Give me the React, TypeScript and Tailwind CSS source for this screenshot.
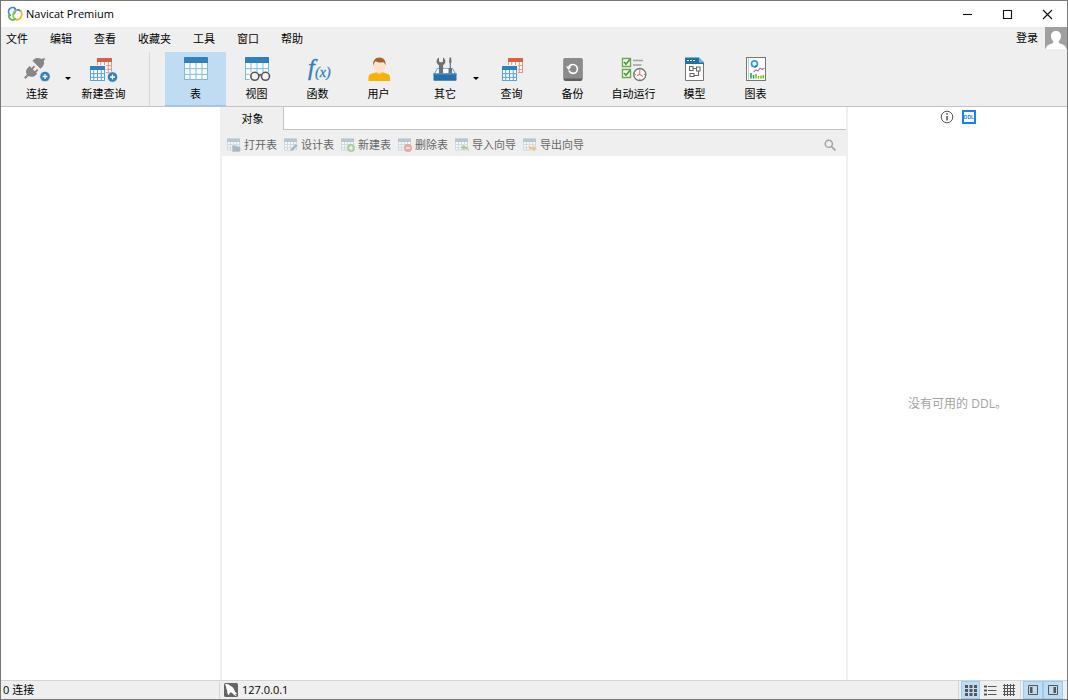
import type { ReactNode } from "react";

const BLUE = "#2f80bd";
const RED = "#dd5f42";

type GridProps = { x: number; y: number; w: number; h: number; color: string; line: string; cols?: number; head?: number };

function Grid({ x, y, w, h, color, line, cols = 4, head = 5 }: GridProps) {
  const body = h - head;
  return (
    <g>
      <rect x={x + 0.5} y={y + 0.5} width={w - 1} height={h - 1} fill="#fff" stroke={line} />
      {Array.from({ length: cols - 1 }, (_, i) => (
        <path key={`c${i}`} d={`M${x + ((i + 1) * w) / cols} ${y + head}v${body}`} stroke={line} />
      ))}
      {[1, 2].map((i) => (
        <path key={`r${i}`} d={`M${x} ${y + head + (i * body) / 3}h${w}`} stroke={line} />
      ))}
      <path d={`M${x} ${y + head}v${-head + 1}q0 -1 1 -1h${w - 2}q1 0 1 1v${head - 1}z`} fill={color} />
    </g>
  );
}

function Plus({ x, y }: { x: number; y: number }) {
  return (
    <g>
      <circle cx={x} cy={y} r="5.2" fill={BLUE} stroke="#efefef" strokeWidth="0.8" />
      <path d={`M${x - 2.5} ${y}h5M${x} ${y - 2.5}v5`} stroke="#fff" strokeWidth="1.3" />
    </g>
  );
}

function Art({ children }: { children: ReactNode }) {
  return (
    <svg className="overflow-visible" width="28" height="26" viewBox="0 0 28 26" fill="none" aria-hidden="true">
      {children}
    </svg>
  );
}

const art = {
  connect: (
    <Art>
      <g fill="#868686">
        <path d="M22.2 2l1.100 1.100-1.600 1.700c.8 2.300.2 4.500-1.400 6.100l-1.900 1.900-8-8 1.700-1.600c1.700-1.600 5-1.800 7.500-.1z" transform="translate(-1 0)" />
        <path d="M5.600 11.500l1.600-1.400 1.900 1.900 2.300-2.400 1.300 1.300-2.300 2.400 1.900 1.900 2.300-2.300 1.300 1.300-2.300 2.300 1.100 1.200-1.600 1.500c-2.100 1.900-5.200 2.100-7.200.8l-2.900 3-1.500-1.500 2.900-2.900c-1.600-2.300-.9-5.200 1.200-7.100z" transform="translate(-.5 0)" />
      </g>
      <Plus x={22} y={20.5} />
    </Art>
  ),
  newQuery: (
    <Art>
      <Grid x={7} y={2} w={15} h={15} color={RED} line="#e99380" cols={4} head={4} />
      <path d="M0 9h16v17h-16z" fill="#efefef" />
      <Grid x={0} y={10} w={15} h={15} color={BLUE} line="#57a3dc" cols={4} head={4} />
      <Plus x={22.5} y={21} />
    </Art>
  ),
  table: (
    <Art>
      <Grid x={2} y={1} w={24} h={23} color={BLUE} line="#78bbe8" head={6} />
    </Art>
  ),
  view: (
    <Art>
      <Grid x={2} y={1} w={24} h={23} color={BLUE} line="#78bbe8" head={6} />
      <path d="M6.500 16h21.500v9h-21.500z" fill="#efefef" />
      <g stroke="#555" strokeWidth="1.600" fill="#f3f3f3">
        <circle cx="11.800" cy="20.300" r="4" />
        <circle cx="22.500" cy="20.300" r="4" />
        <path d="M15.600 19.500q1.500-1.500 3 0" fill="none" />
      </g>
    </Art>
  ),
  fn: (
    <Art>
      <text x="4" y="19" fill={BLUE} className="font-['Liberation_Serif',serif] text-[24px] italic" stroke={BLUE} strokeWidth="0.4">f</text>
      <text x="11" y="21" fill={BLUE} className="font-['Liberation_Serif',serif] text-[14px] italic" stroke={BLUE} strokeWidth="0.3">(x)</text>
    </Art>
  ),
  user: (
    <Art>
      <path d="M3.500 25v-3.500c0-2.500 1.600-3.700 3.800-4.100l4-1.100h6l4 1.100c2.200.4 3.800 1.600 3.800 4.100v3.500z" fill="#f9b200" />
      <path d="M11.300 13h6v3.600q-3 3.400-6 0z" fill="#f5cfae" />
      <path d="M8.500 7h11.800v3c0 4-2.800 6.700-5.900 6.700s-5.900-2.700-5.900-6.700z" fill="#fbe3cd" />
      <path d="M8.300 9.500c-.8-5 2-8 6.100-8s6.900 3 6.100 8c-.4-1.500-1-2.500-1.900-3.200-2.700.5-6 .4-8.200-1-.9 1.100-1.600 2.500-2.100 4.200z" fill="#a9602c" />
    </Art>
  ),
  tools: (
    <Art>
      <path d="M2.800 19l3.700-6.500h15l3.700 6.500" fill="#fff" stroke="#75b4df" strokeWidth="1.200" />
      <path d="M8 1.500v4l2 1 2-1v-4c3.200 1.800 3.100 6.200.1 7.600v8.400h-4.200v-8.400c-3-1.400-3.100-5.800.1-7.600z" fill="#707070" />
      <path d="M18.500 1.500h1.600l.4 4.500-.6 1.500v4.200l1.200.8v5h-3.600v-5l1.200-.8v-4.200l-.6-1.500z" fill="#707070" />
      <path d="M2.500 17.500h23v6.500q0 .8-.8.8h-21.400q-.8 0-.8-.8z" fill="#256fab" />
      <path d="M2.500 17.500h23v1.200h-23z" fill="#3f8fc9" />
    </Art>
  ),
  query: (
    <Art>
      <Grid x={10} y={2} w={15} h={15} color={RED} line="#e99380" cols={4} head={4} />
      <path d="M3 9h17v17h-17z" fill="#efefef" />
      <Grid x={4} y={10} w={15} h={15} color={BLUE} line="#57a3dc" cols={4} head={4} />
    </Art>
  ),
  backup: (
    <Art>
      <rect x="4.500" y="2" width="19" height="23" rx="2" fill="#5f5f5f" />
      <rect x="4.500" y="2" width="19" height="20.500" rx="1.500" fill="#8b8b8b" />
      <path d="M10 14.500c1 2.200 2.500 3 4.200 2.900 2.500-.2 4.300-2.100 4.200-4.500s-2-4.400-4.500-4.400c-2.200 0-3.900 1.500-4.300 3.600" stroke="#fff" strokeWidth="1.700" />
      <path d="M7 10.500h5.500l-2.800 3.800z" fill="#fff" />
    </Art>
  ),
  auto: (
    <Art>
      <g stroke="#65ac4d" strokeWidth="1.400">
        <path d="M2.500 2.500h8v8h-8zM2.500 13.500h8v8h-8z" fill="#fff" />
        <path d="M4 6l2 2.200 4-5M4 17l2 2.200 4-5" stroke="#4d9f35" strokeWidth="1.800" />
      </g>
      <path d="M13 4.500h10M13 9h8.500" stroke="#a1a1a1" strokeWidth="1.500" />
      <circle cx="19.800" cy="18.500" r="6" fill="#fff" stroke="#777" strokeWidth="1.400" />
      <path d="M19.800 14.500v4l3.200 2M19.800 18.500l-3 1" stroke="#dd6f5b" strokeWidth="1.100" />
      <path d="M19.800 13.500v1M19.800 22.500v1M14.800 18.500h1M23.800 18.500h1" stroke="#777" />
    </Art>
  ),
  model: (
    <Art>
      <path d="M4.500 2v22.500h18v-17.500" fill="#fff" stroke="#777" />
      <path d="M4 1.500h14l5 5v1.500h-19z" fill="#1c71ae" />
      <path d="M18 1.500l5 5h-5z" fill="#75b7e8" />
      <path d="M6 4.500h2M9 4.500h2M12 4.500h2" stroke="#fff" />
      <g stroke="#686868" strokeWidth="1.100">
        <path d="M8.500 10.500h3.500v4h-3.500zM15.500 11h3.500v4h-3.500zM9 17.500h4v3h-4zM12 12.500h3.500M17.500 15v4.500h-4.500" />
      </g>
    </Art>
  ),
  chart: (
    <Art>
      <rect x="4.500" y="1.500" width="19" height="23" fill="#fff" stroke="#777" />
      <path d="M6.500 2v22" stroke="#ccc" />
      <circle cx="12.500" cy="7.800" r="3" stroke="#25a2df" strokeWidth="1.700" />
      <path d="M14.500 9.800a3 3 0 0 1-2 1" stroke="#3067c5" strokeWidth="1.700" />
      <path d="M11.500 16l2.500-2 2 1 2-3 2 1.500 2.500-1.500" stroke="#bb70ca" strokeWidth="1.200" />
      <path d="M9 17v5.500M11.500 19v3.500" stroke="#159a62" strokeWidth="1.500" />
      <path d="M14 18v4.500M16.500 20v2.500M19 19.500v3M21.300 19v3.500" stroke="#73bd23" strokeWidth="1.500" />
    </Art>
  ),
};

function Tool({ icon, label, active = false, menu = false }: { icon: ReactNode; label: string; active?: boolean; menu?: boolean }) {
  return (
    <button
      type="button"
      className={`relative flex h-[54px] shrink-0 flex-col items-center gap-1 pt-1 ${menu ? "w-[72px]" : "w-[61px]"} ${active ? "border-b border-[#90c8f6] bg-[#c0dcf3]" : "hover:bg-[#dfeaf3]"}`}
    >
      {icon}
      <span className="text-[11px] leading-4">{label}</span>
      {menu && <span className="absolute right-0.5 top-[25px] border-x-[3px] border-t-[3px] border-x-transparent border-t-black" />}
    </button>
  );
}

const actions: { label: string; mark: ReactNode }[] = [
  { label: "打开表", mark: <path d="M5 7h3l1 1h4v1.500h1l-1 4.500h-8z" fill="#91a5b5" stroke="#efefef" strokeWidth="0.600" /> },
  { label: "设计表", mark: <path d="M6 13.500l.8-3 5-5 2.200 2.200-5 5z" fill="#8fa6b7" stroke="#efefef" strokeWidth="0.600" /> },
  {
    label: "新建表",
    mark: (
      <>
        <circle cx="10" cy="10" r="4" fill="#98c48b" />
        <path d="M7.800 10h4.400M10 7.800v4.400" stroke="#fff" strokeWidth="1.200" />
      </>
    ),
  },
  {
    label: "删除表",
    mark: (
      <>
        <circle cx="10" cy="10" r="4" fill="#df928b" />
        <path d="M7.800 10h4.400" stroke="#fff" strokeWidth="1.200" />
      </>
    ),
  },
  { label: "导入向导", mark: <path d="M5.500 9.500l4-3.500v2c3 0 4.800 1.500 4.500 6-1-2.200-2-2.800-4.500-2.700v1.700z" fill="#8fc07f" stroke="#efefef" strokeWidth="0.500" /> },
  { label: "导出向导", mark: <path d="M6 6c.2 2.300 1.200 3 4 3v-1.800l4 3.300-4 3.500v-2c-3.500 0-5.500-2.200-4-6z" fill="#ecb566" stroke="#efefef" strokeWidth="0.500" /> },
];

function ActionIcon({ mark }: { mark: ReactNode }) {
  return (
    <svg className="opacity-75" width="14" height="14" viewBox="0 0 14 14" fill="none" aria-hidden="true">
      <path d="M.5 1h12v11h-12z" fill="#f8fafb" stroke="#c7d2da" />
      <path d="M3.500 4v8M6.500 4v8M9.500 4v8M0 6.500h13M0 9.500h13" stroke="#c7d2da" />
      <path d="M0 .5h13v3.500h-13z" fill="#a5bac9" />
      {mark}
    </svg>
  );
}

function StatusButton({ label, active = false, wide = false, children }: { label: string; active?: boolean; wide?: boolean; children: ReactNode }) {
  return (
    <button
      type="button"
      aria-label={label}
      aria-pressed={active}
      className={`flex h-[18px] items-center justify-center border ${wide ? "w-5" : "w-[19px]"} ${active ? "border-[#9acbf2] bg-[#c0dcf3]" : "border-transparent"}`}
    >
      <svg width="14" height="12" viewBox="0 0 14 12" fill="none" stroke="#555" aria-hidden="true">
        {children}
      </svg>
    </button>
  );
}

const menus = ["文件", "编辑", "查看", "收藏夹", "工具", "窗口", "帮助"];

export default function App() {
  return (
    <div className="flex min-h-screen flex-col border border-[#777] bg-white font-['Open_Sans','Noto_Sans_CJK_SC',sans-serif] text-[11px] leading-4 text-black">
      <header className="flex h-[26px] items-center">
        <svg className="ml-1.5" width="16" height="16" viewBox="0 0 16 16" fill="none" strokeWidth="1.700" strokeLinecap="round" aria-hidden="true">
          <path d="M3.200 9.300C1.200 7.200 1 4.500 2.600 2.900S6.800.9 8 2.500c1.100 1.600.3 3.900-1.800 6" stroke="#2f86ee" />
          <path d="M9.300 4.300c1.600-.8 3.300-.5 4.400.8" stroke="#2f86ee" />
          <path d="M9.300 4.300C7.500 5.200 6.200 7 6.200 8.900c-.2 2.100 1.200 4.500 3.800 4.700" stroke="#9ecb35" />
          <path d="M13.700 5.100c1.200 1.300 1.400 3.500.7 5.300-.8 2-2.500 3.300-4.400 3.200" stroke="#f7b81c" />
          <path d="M2.300 8.200c-.7 1.900-.2 4.100 1.300 5.100 1.400.9 3.200.7 4.400-.3" stroke="#58c155" />
        </svg>
        <h1 className="ml-[3px] flex-1">Navicat Premium</h1>
        {[
          { label: "最小化", d: "M1 5.500h9" },
          { label: "最大化", d: "M1.500 1.500h8v8h-8z" },
          { label: "关闭", d: "M1 1l9 9M10 1l-9 9" },
        ].map((b) => (
          <button key={b.label} type="button" aria-label={b.label} className="flex h-full w-10 items-center justify-center">
            <svg width="11" height="11" viewBox="0 0 11 11" fill="none" stroke="#111" strokeWidth="1.100" aria-hidden="true">
              <path d={b.d} />
            </svg>
          </button>
        ))}
      </header>

      <div className="border-b border-[#c3c3c3] bg-[#efefef]">
        <div className="flex h-[25px] items-start justify-between">
          <nav className="flex gap-[22px] pl-[5px] pt-1">
            {menus.map((m) => (
              <button key={m} type="button">{m}</button>
            ))}
          </nav>
          <div className="flex items-center gap-[7px]">
            <button type="button">登录</button>
            <svg width="22" height="22" viewBox="0 0 22 22" aria-hidden="true">
              <path d="M0 0h22v22H0z" fill="#a0a0a0" />
              <path d="M11 4c3 0 5 2 5 5 0 2.500-1 4-2.200 5v2l4.500 1.800c1.700.7 2.700 2 3.200 4.200H.5c.5-2.200 1.500-3.500 3.200-4.200L8.200 16v-2C7 13 6 11.500 6 9c0-3 2-5 5-5z" fill="#fff" />
            </svg>
          </div>
        </div>
        <div className="flex h-[54px]" role="toolbar">
          <Tool icon={art.connect} label="连接" menu />
          <Tool icon={art.newQuery} label="新建查询" />
          <div className="mx-[15px] w-px shrink-0 bg-[#d8d8d8]" />
          <Tool icon={art.table} label="表" active />
          <Tool icon={art.view} label="视图" />
          <Tool icon={art.fn} label="函数" />
          <Tool icon={art.user} label="用户" />
          <Tool icon={art.tools} label="其它" menu />
          <Tool icon={art.query} label="查询" />
          <Tool icon={art.backup} label="备份" />
          <Tool icon={art.auto} label="自动运行" />
          <Tool icon={art.model} label="模型" />
          <Tool icon={art.chart} label="图表" />
        </div>
      </div>

      <main className="flex flex-1">
        <aside className="w-[219px] shrink-0" />
        <section className="flex min-w-0 flex-1 flex-col border-x-2 border-[#efefef]">
          <div className="flex h-[23px] bg-[#efefef]" role="tablist">
            <button type="button" role="tab" aria-selected="true" className="w-[61px]">对象</button>
            <div className="flex-1 border-b border-l border-[#c3c3c3] bg-white" />
          </div>
          <div className="flex h-[26px] items-center gap-[7px] bg-[#efefef] pl-[5px] pr-2.5 pt-1 text-[#666]">
            {actions.map((a) => (
              <button key={a.label} type="button" className="flex shrink-0 items-center gap-[3px]">
                <ActionIcon mark={a.mark} />
                {a.label}
              </button>
            ))}
            <button type="button" aria-label="搜索" className="ml-auto">
              <svg width="12" height="12" viewBox="0 0 12 12" fill="none" stroke="#a0a0a0" strokeWidth="1.400" aria-hidden="true">
                <circle cx="4.800" cy="4.800" r="3.600" />
                <path d="M7.500 7.500l4 4" strokeWidth="1.700" />
              </svg>
            </button>
          </div>
        </section>
        <aside className="flex w-[219px] shrink-0 flex-col items-center">
          <div className="flex gap-2 pt-[3px]">
            <button type="button" aria-label="信息">
              <svg width="14" height="14" viewBox="0 0 14 14" fill="none" stroke="#555" aria-hidden="true">
                <circle cx="7" cy="7" r="5.800" />
                <path d="M7 6v4.500M7 3.300v1.400" strokeWidth="1.500" />
              </svg>
            </button>
            <button type="button" aria-label="DDL">
              <svg width="14" height="14" viewBox="0 0 14 14" fill="none" stroke="#1483f5" aria-hidden="true">
                <path d="M1 1h12v12H1z" strokeWidth="2" fill="#fff" />
                <text x="7" y="8.800" textAnchor="middle" fill="#1483f5" stroke="none" className="font-['Liberation_Sans',sans-serif] text-[5px] font-bold">DDL</text>
              </svg>
            </button>
          </div>
          <div className="flex flex-1 items-center pt-1">
            <p className="text-[12px] text-[#a3a3a3]">没有可用的 DDL。</p>
          </div>
        </aside>
      </main>

      <footer className="flex h-[19px] items-center border-t border-[#d5d5d5] bg-[#efefef]">
        <div className="flex h-4 w-[219px] items-center border-r border-[#d5d5d5] pl-0.5">0 连接</div>
        <div className="flex flex-1 items-center gap-1 pl-1">
          <svg width="14" height="14" viewBox="0 0 14 14" aria-hidden="true">
            <rect width="14" height="14" rx="1.500" fill="#656565" />
            <path d="M1 1.200c2.400-.6 4 .3 5.200 1.500 2.700 1 4.200 3.300 4.700 5.900 1 .8 1.700 1.600 2.100 2.500l-1.900.2 1.900 2c-2.200-.5-3.700-1.700-4.800-3.300-.9-.4-1.600-.6-2.400-.3l-.9 2.600c-1.400-1.200-1.900-2.600-1.600-4.200C2.200 6.200 2.600 3.800 1 1.200z" fill="#fff" />
          </svg>
          127.0.0.1
        </div>
        <div className="flex h-[18px] border-l border-[#d5d5d5] pl-0.5 pr-1">
          <StatusButton label="列表" active>
            <path d="M1 2.500h12M1 6.500h12M1 10.500h12" strokeWidth="3" strokeDasharray="3 1.500" />
          </StatusButton>
          <StatusButton label="详细信息">
            <path d="M1 2.500h3M1 6.500h3M1 10.500h3" strokeWidth="2" />
            <path d="M5 2.500h8.500M5 6.500h8.500M5 10.500h8.500" strokeWidth="1.200" />
          </StatusButton>
          <StatusButton label="ER 图表">
            <path d="M2.500 0v12M5.500 0v12M8.500 0v12M11.500 0v12M1 1.500h12M1 4.500h12M1 7.500h12M1 10.500h12" />
          </StatusButton>
          <div className="mx-0.5 w-px bg-[#d5d5d5]" />
          <StatusButton label="导航窗格" active wide>
            <path d="M2.500 1.500h9v9h-9z" />
            <path d="M4 3h2.500v6H4z" fill="#555" stroke="none" />
          </StatusButton>
          <StatusButton label="信息窗格" active wide>
            <path d="M2.500 1.500h9v9h-9z" />
            <path d="M7.500 3H10v6H7.500z" fill="#555" stroke="none" />
          </StatusButton>
        </div>
      </footer>
    </div>
  );
}
